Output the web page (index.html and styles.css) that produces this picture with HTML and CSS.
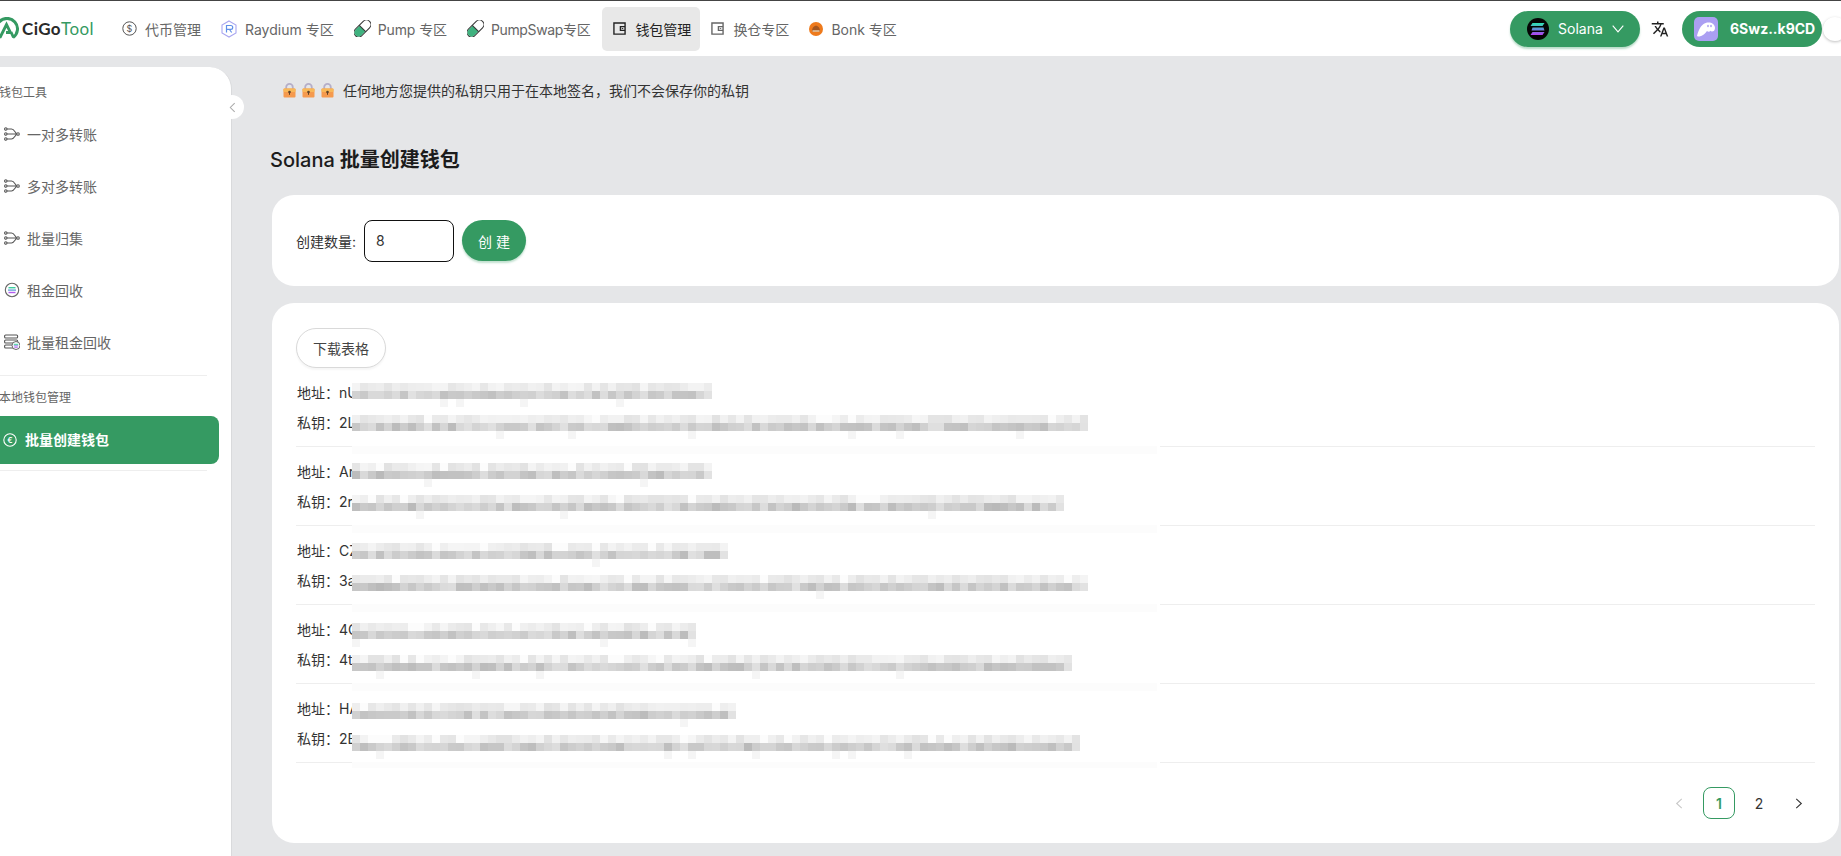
FILE: index.html
```html
<!DOCTYPE html>
<html lang="zh-CN">
<head>
<meta charset="utf-8">
<title>Solana 批量创建钱包</title>
<link rel="stylesheet" href="styles.css">
</head>
<body>
<svg class="defs" width="0" height="0" aria-hidden="true">
  <defs>
    <symbol id="i-transfer" viewBox="0 0 16 16">
      <g fill="none" stroke="#555" stroke-width="1.1">
        <circle cx="1.8" cy="3" r="1.2"/><circle cx="1.8" cy="8" r="1.2"/><circle cx="1.8" cy="13" r="1.2"/><circle cx="14" cy="8" r="1.3"/>
        <path d="M3 3h4.5c2.5 0 3 2.5 5.2 5M3 13h4.5c2.500 0 3-2.500 5.200-5M3 8h9.700"/>
      </g>
    </symbol>
    <symbol id="i-wallet" viewBox="0 0 14 14">
      <path d="M1 1h12v12H1zM13 5H8v4h5" fill="none" stroke="currentColor" stroke-width="1.500"/>
      <rect x="9.500" y="6.500" width="1.500" height="1" fill="currentColor"/>
    </symbol>
    <symbol id="i-pill" viewBox="0 0 17 17">
      <g transform="rotate(-45 8.500 8.500)">
        <rect x="-1.500" y="4" width="20" height="9" rx="4.500" fill="#fff" stroke="#333" stroke-width="1"/>
        <path d="M8.500 4.500H3a4 4 0 0 0 0 8h5.500z" fill="#3fb27f"/>
        <path d="M8.500 4v9" stroke="#333" stroke-width="1"/>
      </g>
    </symbol>
    <symbol id="i-lock" viewBox="0 0 13 15">
      <path d="M3.200 7V4.200a3.300 3.300 0 0 1 6.600 0V7" fill="none" stroke="#b5aec8" stroke-width="1.800"/>
      <rect x="0.500" y="5.500" width="12" height="9" rx="1" fill="#f59a4e"/>
      <rect x="0.500" y="5.500" width="12" height="3.500" rx="1" fill="#f8b858"/>
      <circle cx="6.500" cy="9" r="1.300" fill="#5d4227"/>
      <rect x="6" y="9" width="1" height="2.800" fill="#5d4227"/>
    </symbol>
    <linearGradient id="g-sol" x1="0" y1="0" x2="0" y2="1">
      <stop offset="0" stop-color="#2fe3b0"/><stop offset=".5" stop-color="#5f90d8"/><stop offset="1" stop-color="#b43ff0"/>
    </linearGradient>
  </defs>
</svg>

<header class="topbar">
  <div class="logo">
    <svg class="logo-mark" viewBox="0 0 24 24" width="24" height="24">
      <path d="M6 20.500A10.500 10.500 0 1 1 18 20.500" fill="none" stroke="#359a62" stroke-width="3"/>
      <path d="M5 20.500 11.500 7.500 15.500 15.500H11M16 15l2.500 5.500" fill="none" stroke="#359a62" stroke-width="2.800"/>
    </svg>
    <span class="logo-text">CiGo<span class="logo-accent">Tool</span></span>
  </div>
  <nav class="nav">
    <a class="nav-item">
      <svg class="nav-icon" viewBox="0 0 15 15" width="15" height="15"><circle cx="7.500" cy="7.500" r="6.700" fill="none" stroke="#555" stroke-width="1"/><text x="7.500" y="10.700" class="icon-char">$</text></svg>
      <span>代币管理</span>
    </a>
    <a class="nav-item">
      <svg class="nav-icon" viewBox="0 0 16 18" width="16" height="18"><path d="M8 1l7 4v8l-7 4-7-4V5z" fill="none" stroke="#a9a6f0" stroke-width="1.100"/><path d="M5.500 12.500v-7h4.300a1.900 1.900 0 0 1 0 3.800H6M8.500 9.500l2.200 3" fill="none" stroke="#5f8fe8" stroke-width="1.200"/></svg>
      <span>Raydium 专区</span>
    </a>
    <a class="nav-item nav-item-pill"><svg class="nav-icon" width="17" height="17"><use href="#i-pill"/></svg><span>Pump 专区</span></a>
    <a class="nav-item nav-item-pill nav-item-swap"><svg class="nav-icon" width="17" height="17"><use href="#i-pill"/></svg><span>PumpSwap专区</span></a>
    <a class="nav-item nav-item-wallet is-active"><svg class="nav-icon" width="13" height="13"><use href="#i-wallet"/></svg><span>钱包管理</span></a>
    <a class="nav-item nav-item-wallet"><svg class="nav-icon" width="13" height="13"><use href="#i-wallet"/></svg><span>换仓专区</span></a>
    <a class="nav-item">
      <svg class="nav-icon" viewBox="0 0 14 14" width="14" height="14"><circle cx="7" cy="7" r="7" fill="#ee7a1c"/><path d="M3 9.500C3 6 4.800 3.800 7 3.800S11 6 11 9.500z" fill="#a5561f"/><rect x="3.500" y="8.300" width="7" height="1.400" fill="#e9d3b4"/></svg>
      <span>Bonk 专区</span>
    </a>
  </nav>
  <div class="top-actions">
    <button class="pill pill-chain">
      <svg class="chain-icon" viewBox="0 0 22 22" width="22" height="22">
        <circle cx="11" cy="11" r="11" fill="#050505"/>
        <path d="M5.500 5h12l-2 3H3.500zM5.500 9.500h11l1 3H4.500zM5.500 14h12l-2 3H3.500z" fill="url(#g-sol)"/>
      </svg>
      <span>Solana</span>
      <svg class="chevron" viewBox="0 0 12 8" width="12" height="8"><path d="M.7.7 6 6.800 11.300.7" fill="none" stroke="#fff" stroke-width="1.100"/></svg>
    </button>
    <svg class="translate" viewBox="0 0 24 24" width="18" height="18"><path d="M12.870 15.070l-2.540-2.510.03-.03c1.740-1.940 2.980-4.170 3.710-6.530H17V4h-7V2H8v2H1v1.990h11.170C11.500 7.920 10.440 9.750 9 11.350 8.070 10.320 7.300 9.190 6.690 8h-2c.73 1.630 1.730 3.170 2.980 4.560l-5.090 5.020L4 19l5-5 3.110 3.110.76-2.040zM18.500 10h-2L12 22h2l1.120-3h4.750L21 22h2l-4.500-12zm-2.620 7l1.620-4.330L19.120 17h-3.240z" fill="#222"/></svg>
    <button class="pill pill-wallet">
      <span class="phantom">
        <svg viewBox="0 0 24 24" width="24" height="24"><path d="M3 19c.6-3 1.500-5 2.500-7C7.500 8 10.500 5.500 14.500 5.500c3.500 0 6.500 2 6.500 5.500 0 2.500-1.500 3.500-3 3.500-.8 0-1.300-.4-1.600-.8-.4.7-1 1-1.700 1-.8 0-1.300-.4-1.700-.8-1.500 2.500-4.500 5-7.500 5.600-.8.200-1.500.100-2.500-.500z" fill="#fff"/><ellipse cx="14" cy="9" rx=".8" ry="1.200" fill="#ab9ff2"/><ellipse cx="17" cy="9" rx=".8" ry="1.200" fill="#ab9ff2"/></svg>
      </span>
      <span class="wallet-addr">6Swz..k9CD</span>
    </button>
    <span class="switch-knob"></span>
  </div>
</header>

<div class="layout">
  <aside class="sidebar">
    <span class="collapse">
      <svg viewBox="0 0 8 12" width="7" height="11"><path d="M6.500 1 1.500 6l5 5" fill="none" stroke="#aaa" stroke-width="1.200"/></svg>
    </span>
    <div class="side-label">钱包工具</div>
    <a class="side-item"><svg class="side-icon" width="16" height="16"><use href="#i-transfer"/></svg><span>一对多转账</span></a>
    <a class="side-item"><svg class="side-icon" width="16" height="16"><use href="#i-transfer"/></svg><span>多对多转账</span></a>
    <a class="side-item"><svg class="side-icon" width="16" height="16"><use href="#i-transfer"/></svg><span>批量归集</span></a>
    <a class="side-item">
      <svg class="side-icon" viewBox="0 0 16 16" width="16" height="16"><circle cx="8" cy="8" r="6.700" fill="#fff" stroke="#666" stroke-width="1.100"/><path d="M4.500 5h7v1.400h-7z" fill="#3ccf9f"/><path d="M4 7.400h8v1.400H4z" fill="#6aa3d8"/><path d="M4.500 9.800h7v1.400h-7z" fill="#b45df0"/></svg>
      <span>租金回收</span>
    </a>
    <a class="side-item">
      <svg class="side-icon" viewBox="0 0 16 16" width="16" height="16"><g fill="none" stroke="#555" stroke-width="1.100"><rect x=".6" y="1" width="13" height="3" rx="1"/><rect x=".6" y="6" width="13" height="3" rx="1"/><rect x=".6" y="11" width="13" height="3" rx="1"/></g><circle cx="12" cy="11.500" r="4" fill="#fff" stroke="#666"/><path d="M9.800 9.800h4.400v1H9.800z" fill="#3ccf9f"/><path d="M9.800 11.300h4.400v1H9.800z" fill="#8a7fe0"/><path d="M10.300 12.800h3.400v.9h-3.400z" fill="#b45df0"/></svg>
      <span>批量租金回收</span>
    </a>
    <div class="side-divider side-divider-first"></div>
    <div class="side-label side-label-second">本地钱包管理</div>
    <a class="side-item-active">
      <svg class="side-icon-small" viewBox="0 0 14 14" width="14" height="14"><circle cx="7" cy="7" r="6.200" fill="none" stroke="#fff" stroke-width="1.100"/><text x="7" y="9.800" class="icon-char icon-char-white">€</text></svg>
      <span class="side-active-text">批量创建钱包</span>
    </a>
    <div class="side-divider"></div>
  </aside>

  <main class="main">
    <div class="notice">
      <span class="locks">
        <svg width="13" height="15"><use href="#i-lock"/></svg>
        <svg width="13" height="15"><use href="#i-lock"/></svg>
        <svg width="13" height="15"><use href="#i-lock"/></svg>
      </span>
      <span>任何地方您提供的私钥只用于在本地签名，我们不会保存你的私钥</span>
    </div>
    <h1 class="title"><span class="title-latin">Solana</span> 批量创建钱包</h1>

    <section class="card card-form">
      <label class="form-label" for="count">创建数量:</label>
      <input class="count-input" id="count" type="text" value="8">
      <button class="btn-create">创 建</button>
    </section>

    <section class="card card-list">
      <canvas class="mosaic" id="mosaic" width="808" height="385"></canvas>
      <button class="btn-download">下载表格</button>
      <div class="row"><div class="line">地址：nU</div><div class="line">私钥：2L</div></div>
      <div class="row"><div class="line">地址：Ar</div><div class="line">私钥：2r</div></div>
      <div class="row"><div class="line">地址：CZ</div><div class="line">私钥：3a</div></div>
      <div class="row"><div class="line">地址：4C</div><div class="line">私钥：4t</div></div>
      <div class="row"><div class="line">地址：HA</div><div class="line">私钥：2B</div></div>
      <div class="pager">
        <span class="page page-disabled"><svg viewBox="0 0 8 12" width="8" height="11"><path d="M7 1 1.500 6 7 11" fill="none" stroke="#c8c8c8" stroke-width="1.200"/></svg></span>
        <span class="page page-current">1</span>
        <span class="page">2</span>
        <span class="page"><svg viewBox="0 0 8 12" width="8" height="11"><path d="M1 1l5.500 5L1 11" fill="none" stroke="#333" stroke-width="1.200"/></svg></span>
      </div>
    </section>
  </main>
</div>
<script src="mosaic.js"></script>
</body>
</html>
```

FILE: styles.css
```css
* { box-sizing: border-box; }
html, body { margin: 0; padding: 0; }
body {
  width: 1841px;
  height: 856px;
  overflow: hidden;
  background: #e5e6e8;
  color: #333;
  font-family: Inter, "Noto Sans CJK SC", sans-serif;
  font-size: 14px;
  display: flex;
  flex-direction: column;
}
.defs { position: absolute; }
button { font: inherit; cursor: pointer; }

.topbar {
  height: 56px;
  flex: none;
  background: #fff;
  border-top: 1px solid #444;
  display: flex;
  align-items: center;
}
.logo {
  width: 117px;
  flex: none;
  margin-left: -5px;
  display: flex;
  align-items: center;
  gap: 3px;
}
.logo-mark { flex: none; }
.logo-text {
  font-family: Lato, sans-serif;
  font-size: 17px;
  font-weight: 700;
  letter-spacing: .4px;
  color: #2a2a2a;
}
.logo-accent { color: #359a62; font-weight: 400; }

.nav { display: flex; align-items: center; }
.nav-item {
  height: 44px;
  padding: 0 10px;
  display: flex;
  align-items: center;
  gap: 8px;
  color: #666;
  white-space: nowrap;
  border-radius: 5px;
}
.nav-icon { flex: none; color: #666; }
.nav-item-pill { gap: 7px; letter-spacing: -.1px; }
.nav-item-swap { letter-spacing: -.35px; }
.nav-item-wallet { padding-left: 11px; gap: 9px; }
.is-active {
  background: #e8e8e8;
  color: #222;
  margin-left: 2px;
  padding-right: 9px;
}
.is-active .nav-icon { color: #222; }
.icon-char {
  font-family: Inter, sans-serif;
  font-size: 9px;
  fill: #555;
  text-anchor: middle;
}
.icon-char-white { fill: #fff; font-size: 8px; }

.top-actions {
  margin-left: auto;
  margin-right: -6px;
  display: flex;
  align-items: center;
  gap: 13px;
}
.pill {
  height: 36px;
  border: 0;
  border-radius: 18px;
  background: #359a62;
  color: #fff;
  display: flex;
  align-items: center;
  white-space: nowrap;
}
.pill-chain {
  width: 130px;
  padding: 0 0 0 17px;
  box-shadow: 0 2px 2px rgba(53, 154, 98, .35);
}
.chain-icon { flex: none; margin-right: 9px; }
.chevron { flex: none; margin-left: 9px; }
.translate { margin-left: -2px; }
.pill-wallet { width: 140px; padding: 0 0 0 12px; }
.phantom {
  width: 24px;
  height: 24px;
  border-radius: 5px;
  background: #ab9ff2;
  display: flex;
  flex: none;
}
.wallet-addr { margin-left: 12px; font-weight: 700; font-size: 14px; }
.switch-knob {
  width: 24px;
  height: 24px;
  flex: none;
  margin-left: -12px;
  border-radius: 50%;
  background: #fff;
  box-shadow: 0 1px 3px rgba(0, 0, 0, .25);
}

.layout { flex: 1; display: flex; min-height: 0; }

.sidebar {
  position: relative;
  width: 232px;
  flex: none;
  margin-top: 11px;
  padding-top: 16px;
  background: #fff;
  border-right: 1px solid #d9dadc;
  border-top-right-radius: 22px;
  color: #666;
}
.collapse {
  position: absolute;
  left: 220px;
  top: 28px;
  width: 24px;
  height: 24px;
  border-radius: 50%;
  background: #fff;
  display: flex;
  align-items: center;
  justify-content: center;
}
.side-label {
  height: 20px;
  line-height: 20px;
  margin: 0 0 5px -1px;
  font-size: 12px;
  color: #666;
}
.side-label-second { margin: 12px 0 8px -1px; }
.side-item {
  height: 52px;
  padding-left: 4px;
  display: flex;
  align-items: center;
  gap: 7px;
  color: #666;
}
.side-icon { flex: none; }
.side-divider { width: 207px; height: 1px; margin-top: 6px; background: #eee; }
.side-divider-first { margin-top: 7px; }
.side-item-active {
  width: 219px;
  height: 48px;
  padding-left: 3px;
  margin-bottom: 2px;
  display: flex;
  align-items: center;
  gap: 8px;
  background: #359a62;
  border-radius: 0 8px 8px 0;
  color: #fff;
  font-weight: 600;
}
.side-active-text { margin-top: -2px; }
.side-icon-small { flex: none; }

.main { flex: 1; min-width: 0; padding: 23px 2px 0 40px; }
.notice {
  height: 22px;
  display: flex;
  align-items: center;
  color: #333;
}
.locks {
  display: flex;
  gap: 6px;
  margin: 0 9px 0 11px;
}
.title {
  margin: 45px 0 21px -2px;
  height: 28px;
  line-height: 28px;
  font-size: 20px;
  font-weight: 600;
  color: #1c1c1c;
}
.title-latin { font-weight: 500; }
.card { background: #fff; border-radius: 22px; }
.card-form {
  height: 91px;
  padding: 0 24px;
  display: flex;
  align-items: center;
  gap: 8px;
}
.form-label { color: #333; }
.count-input {
  width: 90px;
  height: 42px;
  padding: 0 11px;
  border: 1px solid #111;
  border-radius: 8px;
  font: inherit;
  color: #333;
  outline: 0;
}
.btn-create {
  width: 64px;
  height: 41px;
  border: 0;
  border-radius: 21px;
  background: #359a62;
  color: #fff;
  box-shadow: 0 2px 2px rgba(53, 154, 98, .3);
}
.card-list {
  position: relative;
  height: 540px;
  margin-top: 17px;
  padding: 25px 24px 0;
}
.mosaic { position: absolute; left: 80px; top: 80px; }
.btn-download {
  display: block;
  width: 90px;
  height: 40px;
  padding: 0;
  border: 1px solid #d9d9d9;
  border-radius: 20px;
  background: #fff;
  color: #444;
  box-shadow: 0 2px 2px rgba(0, 0, 0, .04);
}
.row { padding: 10px 0 8px; border-bottom: 1px solid #eee; }
.line { height: 30px; line-height: 30px; padding-left: 1px; color: #333; }
.pager {
  display: flex;
  justify-content: flex-end;
  gap: 8px;
  margin-top: 24px;
}
.page {
  width: 32px;
  height: 32px;
  display: flex;
  align-items: center;
  justify-content: center;
  border-radius: 8px;
  color: #333;
}
.page-current {
  border: 1px solid #359a62;
  color: #359a62;
  font-weight: 600;
}
```

FILE: mosaic.js
```js
// Pixelated redaction laid over the wallet addresses and private keys.
(function () {
  var ctx = document.getElementById('mosaic').getContext('2d');
  var seed = 20240611;
  function rnd() {
    seed = (seed * 1664525 + 1013904223) >>> 0;
    return seed / 4294967296;
  }
  function cell(x, y, v) {
    ctx.fillStyle = 'rgb(' + v + ',' + v + ',' + v + ')';
    ctx.fillRect(x, y, 8, 8);
  }
  // Canvas origin sits at page (352, 383).
  function band(top, endX) {
    var n = Math.round((endX - 352) / 8);
    for (var i = 0; i < n; i++) {
      var x = i * 8;
      var light = rnd() < 0.08 ? 252 : Math.round(226 + rnd() * 20);
      cell(x, top, light);
      var dark = i >= n - 1 ? 226 : Math.round(184 + rnd() * 34 + rnd() * 8);
      cell(x, top + 8, dark);
      if (rnd() < 0.05) cell(x, top + 16, 245);
    }
  }
  ctx.fillStyle = '#fff';
  ctx.fillRect(0, 0, 808, 385);
  [63, 142, 221, 300, 379].forEach(function (y) {
    ctx.fillStyle = '#fcfcfc';
    ctx.fillRect(0, y, 805, 8);
  });
  var addr = [[0, 712], [80, 712], [160, 726], [240, 695], [320, 735]];
  var keys = [[32, 1087], [112, 1063], [192, 1087], [272, 1072], [352, 1083]];
  addr.concat(keys).forEach(function (b) { band(b[0], b[1]); });
})();
```
